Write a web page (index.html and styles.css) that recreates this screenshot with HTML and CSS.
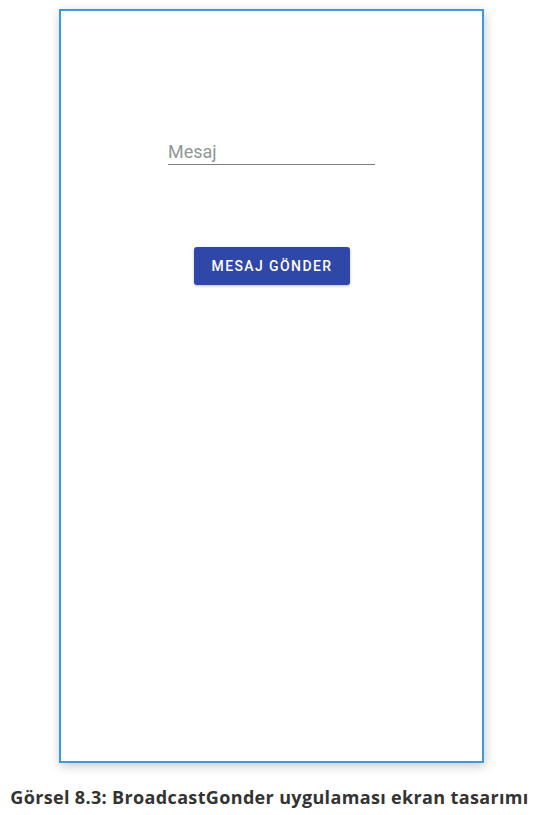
FILE: index.html
```html
<!DOCTYPE html>
<html lang="tr">
<head>
<meta charset="utf-8">
<link rel="stylesheet" href="styles.css">
</head>
<body>
<div class="page">
  <div class="frame">
    <div class="field">
      <span class="hint">Mesaj</span>
    </div>
    <button class="btn">MESAJ GÖNDER</button>
  </div>
  <p class="caption">Görsel 8.3: BroadcastGonder uygulaması ekran tasarımı</p>
</div>
</body>
</html>
```
FILE: styles.css
```css
html, body {
  margin: 0;
  padding: 0;
  background: #ffffff;
}
.page {
  padding-top: 9px;
  display: flex;
  flex-direction: column;
}
.frame {
  box-sizing: border-box;
  margin-left: 59px;
  width: 425px;
  height: 754px;
  border: 2px solid #3d9ade;
  background: #ffffff;
  box-shadow: 1px 3px 10px rgba(0, 0, 0, 0.22);
  display: flex;
  flex-direction: column;
  align-items: center;
}
.field {
  margin-top: 129px;
  width: 207px;
  height: 25px;
  border-bottom: 1px solid #7a7f7f;
  box-sizing: border-box;
  display: flex;
  align-items: flex-end;
  padding-bottom: 2px;
}
.hint {
  font-family: Roboto, "Noto Sans", sans-serif;
  font-size: 18px;
  line-height: 20px;
  color: #8c9996;
}
.btn {
  margin-top: 82px;
  width: 156px;
  height: 38px;
  border: none;
  border-radius: 3px;
  background: #2f47a8;
  color: #ffffff;
  font-family: Roboto, "Noto Sans", sans-serif;
  font-weight: 500;
  font-size: 14px;
  letter-spacing: 1.4px;
  padding: 0 0 0 1px;
  box-shadow: 0 1px 3px rgba(0, 0, 0, 0.25);
}
.caption {
  margin: 23px 0 0;
  text-align: center;
  font-family: "Open Sans", Lato, sans-serif;
  font-weight: 700;
  font-size: 18px;
  letter-spacing: 0.35px;
  line-height: 22px;
  color: #333333;
}
```
